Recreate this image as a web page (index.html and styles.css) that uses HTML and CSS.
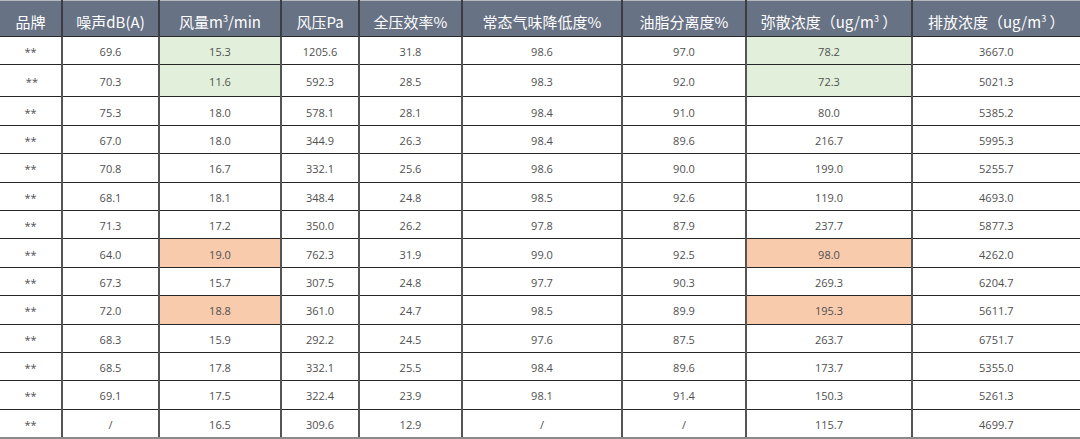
FILE: index.html
```html
<!DOCTYPE html>
<html lang="zh">
<head>
<meta charset="utf-8">
<link rel="stylesheet" href="styles.css">
</head>
<body>
<table class="grid">
  <colgroup>
    <col class="c1"><col class="c2"><col class="c3"><col class="c4"><col class="c5"><col class="c6"><col class="c7"><col class="c8"><col class="c9">
  </colgroup>
  <thead>
    <tr>
      <th>品牌</th>
      <th>噪声dB(A)</th>
      <th>风量m<sup>3</sup>/min</th>
      <th>风压Pa</th>
      <th>全压效率%</th>
      <th>常态气味降低度%</th>
      <th>油脂分离度%</th>
      <th>弥散浓度（ug/m<sup>3</sup> ）</th>
      <th>排放浓度（ug/m<sup>3</sup> ）</th>
    </tr>
  </thead>
  <tbody>
    <tr><td>**</td><td>69.6</td><td class="g">15.3</td><td>1205.6</td><td>31.8</td><td>98.6</td><td>97.0</td><td class="g">78.2</td><td>3667.0</td></tr>
    <tr class="tall"><td>&nbsp;**</td><td>70.3</td><td class="g">11.6</td><td>592.3</td><td>28.5</td><td>98.3</td><td>92.0</td><td class="g">72.3</td><td>5021.3</td></tr>
    <tr><td>**</td><td>75.3</td><td>18.0</td><td>578.1</td><td>28.1</td><td>98.4</td><td>91.0</td><td>80.0</td><td>5385.2</td></tr>
    <tr><td>**</td><td>67.0</td><td>18.0</td><td>344.9</td><td>26.3</td><td>98.4</td><td>89.6</td><td>216.7</td><td>5995.3</td></tr>
    <tr><td>**</td><td>70.8</td><td>16.7</td><td>332.1</td><td>25.6</td><td>98.6</td><td>90.0</td><td>199.0</td><td>5255.7</td></tr>
    <tr><td>**</td><td>68.1</td><td>18.1</td><td>348.4</td><td>24.8</td><td>98.5</td><td>92.6</td><td>119.0</td><td>4693.0</td></tr>
    <tr><td>**</td><td>71.3</td><td>17.2</td><td>350.0</td><td>26.2</td><td>97.8</td><td>87.9</td><td>237.7</td><td>5877.3</td></tr>
    <tr><td>**</td><td>64.0</td><td class="o">19.0</td><td>762.3</td><td>31.9</td><td>99.0</td><td>92.5</td><td class="o">98.0</td><td>4262.0</td></tr>
    <tr><td>**</td><td>67.3</td><td>15.7</td><td>307.5</td><td>24.8</td><td>97.7</td><td>90.3</td><td>269.3</td><td>6204.7</td></tr>
    <tr><td>**</td><td>72.0</td><td class="o">18.8</td><td>361.0</td><td>24.7</td><td>98.5</td><td>89.9</td><td class="o">195.3</td><td>5611.7</td></tr>
    <tr><td>**</td><td>68.3</td><td>15.9</td><td>292.2</td><td>24.5</td><td>97.6</td><td>87.5</td><td>263.7</td><td>6751.7</td></tr>
    <tr><td>**</td><td>68.5</td><td>17.8</td><td>332.1</td><td>25.5</td><td>98.4</td><td>89.6</td><td>173.7</td><td>5355.0</td></tr>
    <tr><td>**</td><td>69.1</td><td>17.5</td><td>322.4</td><td>23.9</td><td>98.1</td><td>91.4</td><td>150.3</td><td>5261.3</td></tr>
    <tr class="last"><td>**</td><td>/</td><td>16.5</td><td>309.6</td><td>12.9</td><td>/</td><td>/</td><td>115.7</td><td>4699.7</td></tr>
  </tbody>
</table>
</body>
</html>
```

FILE: styles.css
```css
html, body {
  margin: 0;
  padding: 0;
  background: #ffffff;
}

.grid {
  width: 1080px;
  table-layout: fixed;
  border-collapse: collapse;
  border-spacing: 0;
  font-family: "Open Sans", "Noto Sans CJK SC", sans-serif;
}

.c1 { width: 62px; }
.c2 { width: 97px; }
.c3 { width: 122px; }
.c4 { width: 78px; }
.c5 { width: 103px; }
.c6 { width: 160px; }
.c7 { width: 124px; }
.c8 { width: 166px; }
.c9 { width: 168px; }

.grid th {
  height: 36px;
  padding: 5px 0 0 0;
  box-sizing: border-box;
  background: #687285;
  color: #ffffff;
  font-family: "Noto Sans CJK SC", sans-serif;
  font-size: 15px;
  font-weight: 400;
  text-align: center;
  white-space: nowrap;
  border-top: 1px solid #b4b8bf;
  border-left: 2px solid #3a3d44;
  border-bottom: 1px solid #2a2a2a;
}

.grid th sup {
  font-size: 9px;
  vertical-align: 6px;
  line-height: 0;
}

.grid th:first-child,
.grid td:first-child {
  border-left: none;
}

.grid th:last-child,
.grid td:last-child {
  border-right: 1px solid #b8b8b8;
}

.grid td {
  height: 28.4px;
  padding: 2px 0 0 0;
  box-sizing: border-box;
  font-size: 11px;
  color: #505050;
  text-align: center;
  white-space: pre;
  border-left: 2px solid #555555;
  border-bottom: 1px solid #262626;
}

.grid tr.tall td {
  height: 32px;
}

.grid tr.last td {
  border-bottom: 2px solid #8a8a8a;
}

.grid td.g {
  background: #e2efda;
}

.grid td.o {
  background: #f8cbad;
}
```
